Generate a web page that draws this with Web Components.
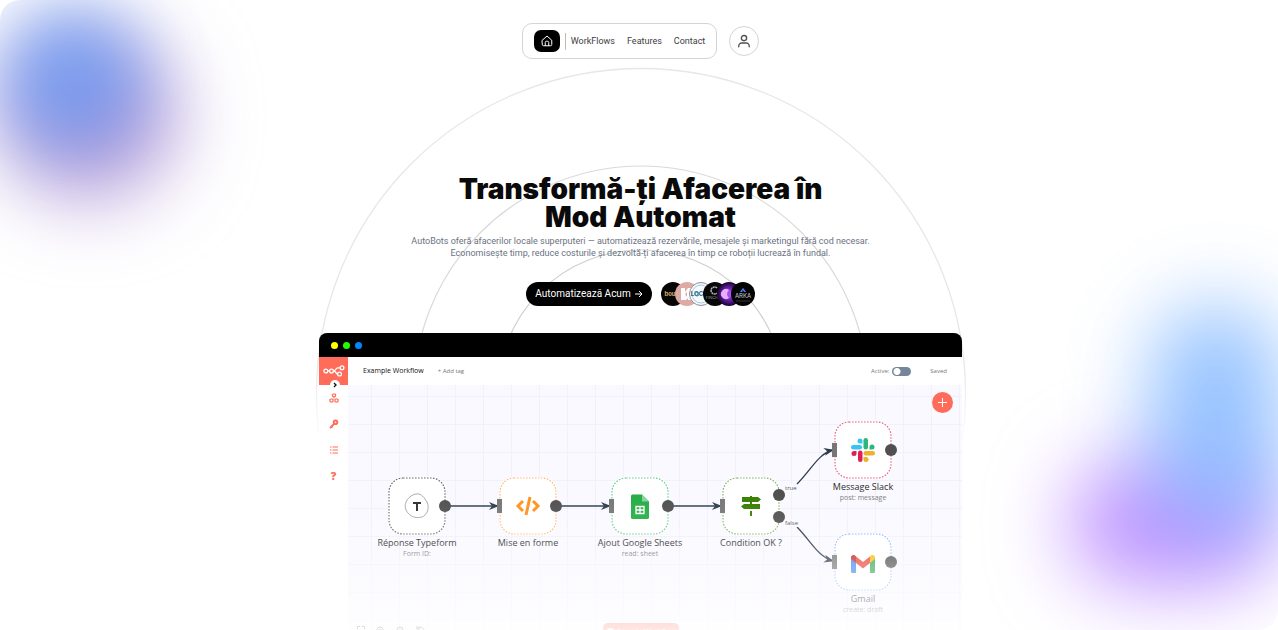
<!DOCTYPE html>
<html lang="ro">
<head>
<meta charset="utf-8">
<title>AutoBots</title>
<style>
html,body{margin:0;background:#fff;font-family:Roboto,"Liberation Sans",sans-serif}
</style>
</head>
<body>
<landing-page>
  <site-nav></site-nav>
  <hero-intro></hero-intro>
  <app-window>
    <flow-canvas></flow-canvas>
  </app-window>
</landing-page>
<script>
const define = (name, html, setup) => customElements.define(name, class extends HTMLElement {
  connectedCallback() {
    if (this.shadowRoot) return;
    const t = document.createElement('template');
    t.innerHTML = html;
    this.attachShadow({mode: 'open'}).append(t.content.cloneNode(true));
    if (setup) setup(this, this.shadowRoot);
  }
});

define('soft-glow', `
<style>
:host{position:absolute;inset:0;pointer-events:none}
i{position:absolute;border-radius:50%;filter:blur(40px)}
.a{left:0;top:34px;width:176px;height:164px;background:#b59cd8}
.b{left:2px;top:8px;width:140px;height:140px;background:#6496f2;filter:blur(34px);opacity:.76}
.c{right:2px;bottom:44px;width:206px;height:126px;background:#c294ff;border-radius:60px}
.d{right:-4px;bottom:96px;width:132px;height:230px;background:#7cb4ff;border-radius:66px;opacity:.8}
</style>
<i class="a"></i><i class="b"></i><i class="c"></i><i class="d"></i>`);

define('orbit-rings', `
<style>
:host{position:absolute;left:0;right:0;top:66px;height:376px;display:flex;justify-content:center;overflow:hidden;pointer-events:none;
-webkit-mask-image:linear-gradient(#000 80%,transparent);mask-image:linear-gradient(#000 80%,transparent)}
svg{flex:none;width:656px;height:656px}
</style>
<svg viewBox="0 0 656 656" fill="none" aria-hidden="true">
<circle cx="328" cy="327" r="324.500" stroke="#e7e7e7" stroke-width="1.300"/>
<circle cx="328" cy="327" r="227" stroke="#d9d9d9" stroke-width="1.200"/>
<circle cx="328" cy="327" r="143" stroke="#cfcfcf" stroke-width="1.200"/>
</svg>`);

define('landing-page', `
<style>
:host{display:block}
main{position:relative;height:100vh;min-height:560px;box-sizing:border-box;padding:23px 0 0 3px;overflow:hidden;border-radius:20px;background:#fff;display:flex;flex-direction:column;align-items:center}
.inner{position:relative;width:100%;flex:1;min-height:0;display:flex;flex-direction:column;align-items:center}
orbit-rings{left:3px}
</style>
<main><soft-glow></soft-glow><orbit-rings></orbit-rings><div class="inner"><slot></slot></div></main>`);

define('site-nav', `
<style>
:host{display:flex;align-items:center;gap:12px;font-size:9px;line-height:12px}
nav{display:flex;align-items:center;gap:12px;box-sizing:border-box;height:36px;padding:0 11px;border:1px solid #d4d4d4;border-radius:10px;background:#fff}
a{color:#404040;text-decoration:none}
.home{display:flex;align-items:center;justify-content:center;width:26px;height:22px;border-radius:7px;background:#000;color:#fff}
.lead{display:flex;align-items:center;gap:5px}
hr{width:1px;height:17px;margin:0;border:0;background:#bbb}
button{display:flex;align-items:center;justify-content:center;width:30px;height:30px;padding:0;border:1px solid #d4d4d4;border-radius:50%;background:#fff;color:#525252}
svg{fill:none;stroke:currentColor;stroke-linecap:round;stroke-linejoin:round}
</style>
<nav aria-label="Principal">
<div class="lead"><a class="home" href="#" aria-label="Acasă"><svg width="12" height="12" viewBox="0 0 24 24" stroke-width="2"><path d="M2.500 10.500 12 2l9.500 8.500V19a2.500 2.500 0 0 1-2.500 2.500H5A2.500 2.500 0 0 1 2.500 19z"/><path d="M8.500 21v-6a2.500 2.500 0 0 1 2.500-2.500h2a2.500 2.500 0 0 1 2.500 2.500v6"/></svg></a><hr><a href="#workflows">WorkFlows</a></div>
<a href="#features">Features</a><a href="#contact">Contact</a>
</nav>
<button type="button" aria-label="Cont"><svg width="14" height="14" viewBox="0 0 24 24" stroke-width="2.300"><circle cx="12" cy="7" r="4.500"/><path d="M3 22v-1.500a5 5 0 0 1 5-5h8a5 5 0 0 1 5 5V22"/></svg></button>`);

define('partner-logos', `
<style>
:host{display:flex}
svg{width:24px;height:24px;flex:none}
svg+svg{margin-left:-10px}
text{text-anchor:middle;font-family:Inter,sans-serif}
</style>
<svg viewBox="0 0 24 24"><circle cx="12" cy="12" r="12" fill="#080605"/><text x="9" y="14" font-size="6" font-weight="700" fill="#d5b36b">bou</text></svg>
<svg viewBox="0 0 24 24"><circle cx="12" cy="12" r="12" fill="#dfaaa3"/><path d="M6 6h4v4l3-4h3v12h-3v-2l-2 2H6z" fill="#fff"/><path d="M10 12l2 3v-5z" fill="#dfaaa3"/></svg>
<svg viewBox="0 0 24 24"><circle cx="12" cy="12" r="11.500" fill="#f7fafc" stroke="#8a8f94"/><circle cx="12" cy="12" r="9" fill="none" stroke="#a7ccdc"/><text x="8" y="14" font-size="6" font-weight="700" fill="#36596a">LOC</text><circle cx="8" cy="12" r="2" fill="none" stroke="#1699d6"/></svg>
<svg viewBox="0 0 24 24"><circle cx="12" cy="12" r="12" fill="#080808"/><path d="M14 6a3.500 3.500 0 1 0 0 5" fill="none" stroke="#b5b5b5" stroke-width="1.500" stroke-dasharray="2 .5"/><text x="9" y="17" font-size="4" fill="#999">FINCH</text></svg>
<svg viewBox="0 0 24 24"><defs><radialGradient id="g"><stop offset="0" stop-color="#e795ff"/><stop offset=".4" stop-color="#7c28c8"/><stop offset="1" stop-color="#16032c"/></radialGradient></defs><circle cx="12" cy="12" r="12" fill="url(#g)"/><circle cx="9" cy="12" r="5" fill="#a94cec"/><path d="M12 8a5 5 0 1 0 0 8q-4-4 0-8" fill="#e3b0fa"/></svg>
<svg viewBox="0 0 24 24"><circle cx="12" cy="12" r="12" fill="#030303"/><path d="M9 10l3-4 3 4h-2l-1-2-1 2z" fill="#269af3"/><path d="M12 6l3 4h-2z" fill="#864cf0"/><text x="12" y="16" font-size="6" fill="#ccc">ARKA</text><path d="M5 19h14" stroke="#555" stroke-width=".7"/></svg>`);

define('hero-intro', `
<style>
:host{display:flex;flex-direction:column;align-items:center;margin-top:116px;text-align:center}
h1{margin:0;max-width:400px;font:900 28px/28px Inter,sans-serif;color:#0a0a0a}
p{margin:4px 0 0;max-width:480px;font-size:9px;line-height:12px;color:#6b7280}
.actions{display:flex;align-items:center;gap:9px;margin-top:23px}
button{display:flex;align-items:center;gap:4px;height:24px;padding:0 9px;border:0;border-radius:12px;background:#000;color:#fff;font:10px/12px Roboto,sans-serif}
</style>
<h1>Transformă-ți Afacerea în Mod Automat</h1>
<p>AutoBots oferă afacerilor locale superputeri — automatizează rezervările, mesajele și marketingul fără cod necesar. Economisește timp, reduce costurile și dezvoltă-ți afacerea în timp ce roboții lucrează în fundal.</p>
<div class="actions"><button type="button">Automatizează Acum<svg width="8" height="8" viewBox="0 0 8 8" fill="none" stroke="#fff"><path d="M0 4h7M4 1l3 3-3 3"/></svg></button><partner-logos></partner-logos></div>`);

define('side-bar', `
<style>
:host{display:flex;flex-direction:column;align-items:center;background:#fff;color:#ff6d5a}
.logo{position:relative;display:flex;align-items:center;justify-content:center;width:100%;height:28px;background:#ff6d5a}
.toggle{position:absolute;left:11px;bottom:-5px;width:10px;height:10px;padding:0;border:0;border-radius:50%;background:#fff;display:flex;align-items:center;justify-content:center}
ul{list-style:none;margin:7px 0 0;padding:0;display:grid;row-gap:14px}
a{display:flex;justify-content:center;align-items:center;width:12px;height:12px;color:#ff6d5a;text-decoration:none}
.q{font:800 11px/12px "Open Sans",sans-serif}
svg{fill:none;stroke:currentColor}
</style>
<div class="logo">
<svg width="22" height="12" viewBox="0 0 22 12" style="color:#fff" stroke-width="1.300"><circle cx="2.800" cy="6" r="1.900"/><circle cx="8.500" cy="6" r="1.900"/><circle cx="19" cy="2.800" r="1.900"/><circle cx="16.500" cy="9" r="1.900"/><path d="M10.400 6c3 0 2-3.200 4.500-3.200h2.200M10.400 6c3 0 2 3 4.200 3M4.700 6h2"/></svg>
<button class="toggle" type="button" aria-label="Expand"><svg width="6" height="6" viewBox="0 0 6 6" style="color:#111" stroke-width="1.300"><path d="M2 1l2 2-2 2"/></svg></button>
</div>
<ul>
<li><a href="#nodes" aria-label="Workflows"><svg width="10" height="10" viewBox="0 0 10 10" stroke-width="1.200"><path d="M3.500 1.500L5 .8l1.500.7v1.700L5 4 3.500 3.200zM1 6.500l1.500-.7 1.500.7v2L2.500 9.200 1 8.500zM6 6.500l1.500-.7 1.500.7v2l-1.500.7L6 8.500z"/><path d="M5 4v1.500" stroke-width=".8"/></svg></a></li>
<li><a href="#keys" aria-label="Credentials"><svg width="10" height="10" viewBox="0 0 10 10"><circle cx="6.500" cy="3.300" r="1.800" stroke-width="2"/><path d="M5.500 4.500L1 9M2 7l1.500 1.500" stroke-width="1.800"/></svg></a></li>
<li><a href="#runs" aria-label="Executions"><svg width="10" height="10" viewBox="0 0 10 10"><path d="M1 2h1.500M1 5h1.500M1 8h1.500M3.500 2H9M3.500 5H9M3.500 8H9" stroke-width="1.200"/></svg></a></li>
<li><a href="#help" class="q">?</a></li>
</ul>`);

define('app-window', `
<style>
:host{position:relative;display:flex;flex-direction:column;flex:1;min-height:0;width:100%;max-width:643px;margin-top:27px;border-radius:8px 8px 0 0;overflow:hidden;background:#fff;font-family:"Open Sans",sans-serif}
.bar{flex:none;display:flex;align-items:center;gap:5px;height:24px;padding-left:12px;background:#000}
.bar i{width:7px;height:7px;border-radius:50%}
.app{flex:1;min-height:0;display:grid;grid-template-columns:29px 1fr}
.work{display:flex;flex-direction:column;min-width:0;min-height:0}
header{flex:none;display:flex;align-items:center;height:28px;padding:0 15px;font-size:6px;line-height:10px;color:#777}
b{font-weight:400;font-size:7px;color:#111;margin-right:14px}
label{display:flex;align-items:center;gap:3px;margin-left:auto;margin-right:19px}
input{appearance:none;margin:0;width:19px;height:9px;border-radius:5px;background:radial-gradient(circle at 5px 50%,#fff 3px,transparent 4px),#75859a}
.fade{position:absolute;inset:160px 0 0 0;background:linear-gradient(rgba(255,255,255,0),rgba(255,255,255,.16) 38%,rgba(255,255,255,.35) 53%,rgba(255,255,255,.6) 78%,rgba(255,255,255,.84));pointer-events:none}
</style>
<div class="bar"><i style="background:#ff0"></i><i style="background:#20ff00"></i><i style="background:#0088ff"></i></div>
<div class="app"><side-bar></side-bar><div class="work">
<header><b>Example Workflow</b><span>+ Add tag</span><label>Active:<input type="checkbox"></label><span>Saved</span></header>
<slot></slot></div></div>
<div class="fade"></div>`);

define('flow-node', `
<style>
:host{position:absolute;left:var(--x);top:var(--y);width:112px;margin-left:-56px;display:flex;flex-direction:column;align-items:center;text-align:center;white-space:nowrap}
.box{position:relative;display:flex;align-items:center;justify-content:center;width:58px;height:58px;box-sizing:border-box;background:#fff;border-radius:14px}
.frame{position:absolute;inset:0}
.frame rect{opacity:.85}
.in{position:absolute;left:-2px;top:22px;width:5px;height:14px;background:#777}
.out{position:absolute;right:-5px;top:23px;width:12px;height:12px;border-radius:50%;background:#505050}
.t{margin-top:2px;font-size:9px;line-height:12px;color:#2e2e2e}
.s{font-size:7px;line-height:10px;color:#808080}
</style>
<div class="box"><svg class="frame" width="58" height="58" fill="none"><rect x="1" y="1" width="56" height="56" rx="14" stroke-width="1.200" stroke-dasharray="1.600 1.400"/></svg><slot></slot></div><div class="t"></div><div class="s"></div>`, (el, r) => {
  el.style.setProperty('--x', el.getAttribute('x') + 'px');
  el.style.setProperty('--y', el.getAttribute('y') + 'px');
  r.querySelector('rect').setAttribute('stroke', el.getAttribute('color'));
  r.querySelector('.t').textContent = el.getAttribute('name');
  r.querySelector('.s').textContent = el.getAttribute('note') || '';
  const box = r.querySelector('.box');
  const add = (cls, top) => { const p = document.createElement('i'); p.className = cls; if (top) p.style.top = top; box.append(p); };
  if (!el.hasAttribute('start')) add('in');
  if (el.hasAttribute('branch')) { add('out', '12px'); add('out', '34px'); } else add('out');
});

define('flow-canvas', `
<style>
:host{position:relative;display:block;flex:1;min-height:0;overflow:hidden;
background:linear-gradient(90deg,#f1f1fb 1px,transparent 1px) 23px 0/28px 28px,linear-gradient(#f1f1fb 1px,transparent 1px) 0 11px/28px 28px,#f9f9ff}
.wires{position:absolute;left:0;top:0}
.tag{position:absolute;left:437px;font-size:6px;line-height:8px;color:#555;background:#f9f9ff}
.add{position:absolute;right:9px;top:7px;width:21px;height:21px;padding:0;border:0;border-radius:50%;background:#ff6d5a;display:flex;align-items:center;justify-content:center}
.run{position:absolute;left:255px;bottom:-10px;width:76px;height:17px;padding:0;border:0;border-radius:5px;background:#ff6d5a;color:#fff;font:7px/10px "Open Sans",sans-serif;display:flex;align-items:center;justify-content:center;gap:3px}
.run i{width:7px;height:7px;border-radius:50%;background:#fff}
.tools{position:absolute;left:9px;bottom:-4px;display:flex;gap:11px;color:#444}
.tools svg{fill:none;stroke:currentColor}
</style>
<svg class="wires" width="614" height="244" fill="none" stroke="#2f3c4c" stroke-width="1.300">
<defs><marker id="h" viewBox="0 0 10 8" refX="9" refY="4" markerWidth="10" markerHeight="8" markerUnits="userSpaceOnUse" orient="auto"><path d="M0 0L10 4L0 8L3 4z" fill="#2f3c4c" stroke="none"/></marker></defs>
<g marker-end="url(#h)"><path d="M97 121H150"/><path d="M208 121H262"/><path d="M320 121H373"/><path d="M449 99C463 85 471 68 485 65"/><path d="M449 142C462 155 470 172 485 176"/></g></svg>
<flow-node x="69" y="92" color="#555" name="Réponse Typeform" note="Form ID:" start><svg width="26" height="26" viewBox="0 0 26 26"><path d="M12 1C18 0 20 5 23 9C26 15 23 22 18 24C11 26 5 23 2 17C-1 10 5 2 12 1z" fill="#fff" stroke="#aaa"/><path d="M9 10h8M13 10v8" stroke="#303030" stroke-width="2" fill="none"/></svg></flow-node>
<flow-node x="180" y="92" color="#ffae60" name="Mise en forme"><svg width="26" height="22" viewBox="0 0 26 22" fill="none" stroke="#ff921c" stroke-width="3"><path d="M8 6L3 11l5 5M18 6l5 5-5 5M15 2l-4 18"/></svg></flow-node>
<flow-node x="292" y="92" color="#4ec77d" name="Ajout Google Sheets" note="read: sheet"><svg width="18" height="25" viewBox="0 0 18 25"><path d="M1.500.5H11l7 7v16a1.500 1.500 0 0 1-1.500 1.500h-15A1.500 1.500 0 0 1 0 23.500V2A1.500 1.500 0 0 1 1.500.5z" fill="#25ad45"/><path d="M11 .5l7 7h-7z" fill="#8ed0a0"/><path d="M5 12.500h8v7H5zM5 16h8M9 12.500v7" fill="none" stroke="#fff" stroke-width="1.300"/></svg></flow-node>
<flow-node x="403" y="92" color="#6ba84c" name="Condition OK ?" branch><svg width="20" height="20" viewBox="0 0 20 20" fill="#377f00"><path d="M9 0h2v1h6l3 2.500L17 6H1V1h8zM3 8h16v5H3L0 10.500zM9 6h2v2H9zM9 15h2v5H9z"/></svg></flow-node>
<flow-node x="515" y="36" color="#e34a6d" name="Message Slack" note="post: message"><svg width="24" height="24" viewBox="0 0 24 24"><g fill="#36c5f0"><rect x="0" y="7" width="11" height="4.500" rx="2.200"/><path d="M11.500 5.500H9A2.500 2.500 0 1 1 11.500 3z"/></g><g fill="#2eb67d"><rect x="12.500" y="0" width="4.500" height="11.500" rx="2.200"/><path d="M18.500 11.500V9a2.500 2.500 0 1 1 2.500 2.500z"/></g><g fill="#ecb22e"><rect x="12.500" y="13" width="11.500" height="4.500" rx="2.200"/><path d="M12.500 19H15a2.500 2.500 0 1 1-2.500 2.500z"/></g><g fill="#e01e5a"><rect x="7" y="12.500" width="4.500" height="11.500" rx="2.200"/><path d="M5.500 13v2.500A2.500 2.500 0 1 1 3 13z"/></g></svg></flow-node>
<flow-node x="515" y="148" color="#7aaef5" name="Gmail" note="create: draft"><svg style="margin-top:4px" width="24" height="18" viewBox="0 0 24 18"><path d="M0 3l5 4v11H1.500A1.500 1.500 0 0 1 0 16.500z" fill="#4285f4"/><path d="M24 3l-5 4v11h3.500a1.500 1.500 0 0 0 1.500-1.500z" fill="#34a853"/><path d="M5 1.500l7 5.500 7-5.500V8l-7 5.500L5 8z" fill="#ea4335"/><path d="M0 2.500C0 0 3-1 5 1.500V8L0 4z" fill="#c5221f"/><path d="M24 2.500C24 0 21-1 19 1.500V8l5-4z" fill="#fbbc04"/></svg></flow-node>
<span class="tag" style="top:99px">true</span><span class="tag" style="top:134px">false</span>
<button class="add" type="button" aria-label="Add node"><svg width="9" height="9" viewBox="0 0 9 9" stroke="#fff"><path d="M0 4.500h9M4.500 0v9"/></svg></button>
<div class="tools" aria-hidden="true">
<svg width="8" height="8"><path d="M.5 3V.5H3M5 .5h2.500V3M.5 5v2.500H3M5 7.500h2.500V5"/></svg>
<svg width="9" height="8"><circle cx="4" cy="4" r="3"/><path d="M6 6l2 2M2.500 4h3M4 2.500v3"/></svg>
<svg width="9" height="8"><circle cx="4" cy="4" r="3"/><path d="M6 6l2 2M2.500 4h3"/></svg>
<svg width="9" height="8"><path d="M1 0v3h3M1 3c2-3 7-2 7 2"/></svg></div>
<button class="run" type="button"><i></i>Execute Workflow</button>`);
</script>
</body>
</html>
